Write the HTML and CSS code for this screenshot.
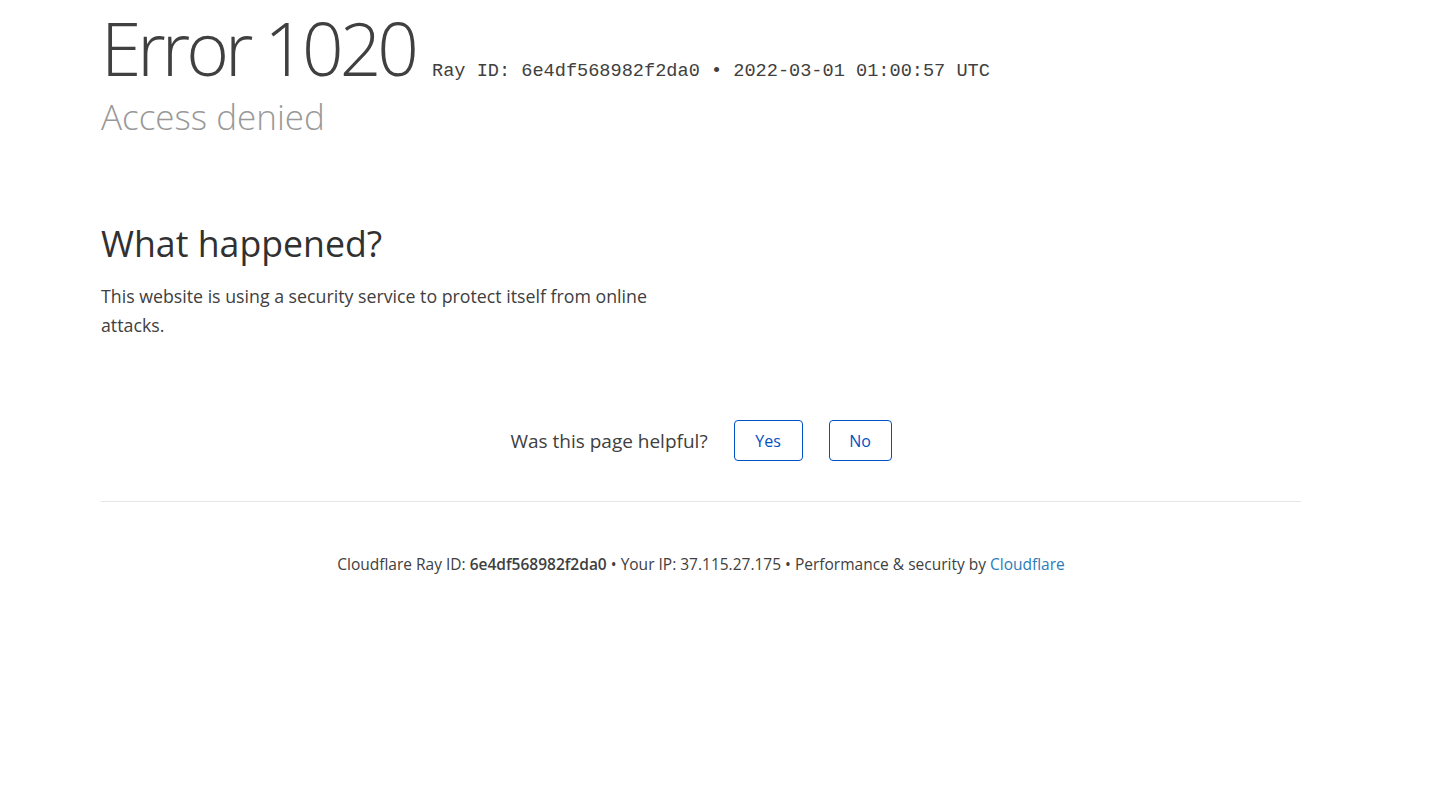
FILE: index.html
```
<!DOCTYPE html>
<html lang="en">
<head>
<meta charset="utf-8">
<title>Access denied | Cloudflare</title>
<link rel="stylesheet" href="styles.css">
</head>
<body>
<div class="wrapper">
  <header class="header">
    <h1 class="title">
      <span class="code">Error 1020</span>
      <span class="ray">Ray ID: 6e4df568982f2da0 &bull; 2022-03-01 01:00:57 UTC</span>
    </h1>
    <h2 class="subtitle">Access denied</h2>
  </header>

  <section class="what">
    <h2 class="what-title">What happened?</h2>
    <p class="what-text">This website is using a security service to protect itself from online attacks.</p>
  </section>

  <div class="feedback">
    <span class="feedback-q">Was this page helpful?</span>
    <button class="btn btn-yes" type="button">Yes</button>
    <button class="btn btn-no" type="button">No</button>
  </div>

  <footer class="footer">
    <p class="footer-text">Cloudflare Ray ID: <strong>6e4df568982f2da0</strong> &bull; Your IP: 37.115.27.175 &bull; Performance &amp; security by <a class="footer-link" href="#">Cloudflare</a></p>
  </footer>
</div>
</body>
</html>
```
FILE: styles.css
```
html, body {
  margin: 0;
  padding: 0;
  background: #fff;
}
body {
  font-family: "Open Sans", "Noto Sans", sans-serif;
  color: #404040;
}
.wrapper {
  width: 1200px;
  margin-left: 101px;
}
.header {
  padding-top: 4px;
}
.title {
  margin: 0;
  display: flex;
  align-items: baseline;
  font-weight: 300;
}
.code {
  font-size: 73px;
  line-height: 88px;
  color: #404040;
  letter-spacing: -4px;
}
.ray {
  margin-left: 17px;
  font-family: "Liberation Mono", "Courier New", monospace;
  font-size: 18.6px;
  font-weight: 400;
  color: #404040;
}
.subtitle {
  margin: 0;
  font-weight: 300;
  font-size: 35px;
  line-height: 50px;
  color: #999;
}
.what {
  margin-top: 77px;
  width: 600px;
}
.what-title {
  margin: 0;
  font-weight: 400;
  font-size: 35.7px;
  line-height: 48px;
  color: #313131;
}
.what-text {
  margin: 15px 0 0;
  font-size: 17.75px;
  line-height: 29px;
  color: #404040;
}
.feedback {
  margin-top: 80px;
  display: flex;
  justify-content: center;
  align-items: center;
  gap: 26px;
  padding-bottom: 40px;
  border-bottom: 1px solid #e5e5e5;
}
.feedback-q {
  font-size: 19px;
  color: #404040;
}
.btn {
  font-family: "Open Sans", "Noto Sans", sans-serif;
  font-size: 16px;
  color: #0051c3;
  background: #fff;
  border: 1px solid #0051c3;
  border-radius: 4px;
  height: 41px;
  padding: 0;
}
.btn-yes { width: 69px; }
.btn-no { width: 63px; }
.footer {
  padding-top: 50px;
}
.footer-text {
  margin: 0;
  text-align: center;
  font-size: 15.5px;
  line-height: 24px;
  color: #404040;
}
.footer-text strong {
  font-weight: 600;
}
.footer-link {
  color: #2c7cb9;
  text-decoration: none;
}
```
